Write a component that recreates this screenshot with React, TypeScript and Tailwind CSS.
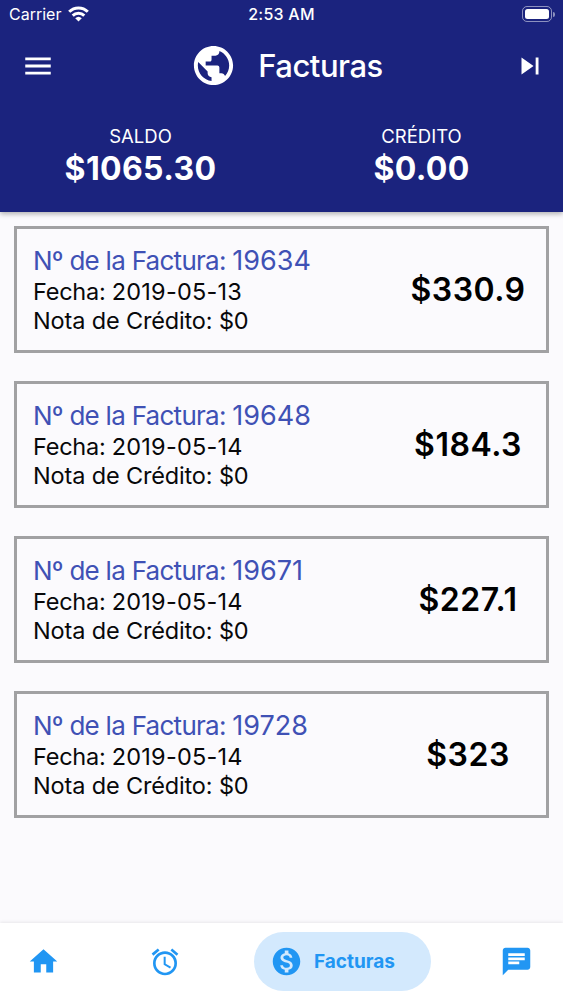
import { MdAccessAlarm, MdChat, MdHome, MdMenu, MdMonetizationOn, MdPublic, MdSkipNext } from "react-icons/md";

type Invoice = {
  number: string;
  date: string;
  credit: string;
  total: string;
};

const invoices: Invoice[] = [
  { number: "19634", date: "2019-05-13", credit: "$0", total: "$330.9" },
  { number: "19648", date: "2019-05-14", credit: "$0", total: "$184.3" },
  { number: "19671", date: "2019-05-14", credit: "$0", total: "$227.1" },
  { number: "19728", date: "2019-05-14", credit: "$0", total: "$323" },
];

function WifiIcon() {
  return (
    <svg viewBox="0 0 21 16" className="h-4 w-[21px]" fill="none" stroke="currentColor" strokeWidth="3">
      <path d="M1.2 5.8a13.2 13.2 0 0 1 18.6 0" />
      <path d="M4.7 9.6a8.3 8.3 0 0 1 11.6 0" />
      <path d="M10.5 15.6 7.2 12.3a4.8 4.8 0 0 1 6.6 0Z" fill="currentColor" stroke="none" />
    </svg>
  );
}

function BatteryIcon() {
  return (
    <div className="flex items-center gap-px">
      <div className="h-4 w-[30px] rounded-[5px] border border-white/50 p-[2px]">
        <div className="h-full rounded-[2.5px] bg-white" />
      </div>
      <div className="h-[5px] w-[2px] rounded-r-full bg-white/50" />
    </div>
  );
}

function StatusBar() {
  return (
    <div className="grid h-7 grid-cols-3 items-center pr-2 pl-[9px] text-base">
      <div className="flex items-center gap-[7px]">
        <span>Carrier</span>
        <WifiIcon />
      </div>
      <span className="pr-px text-center font-medium tracking-[0.25px]">2:53 AM</span>
      <div className="flex justify-end">
        <BatteryIcon />
      </div>
    </div>
  );
}

function Balance({ label, amount }: { label: string; amount: string }) {
  return (
    <div className="flex flex-1 flex-col items-center">
      <span className="text-[18.5px] leading-[25px]">{label}</span>
      <span className="text-[32px] leading-10 font-bold tracking-[0.35px]">{amount}</span>
    </div>
  );
}

function Header() {
  return (
    <header className="h-[212px] bg-[#1b237e] text-white shadow-[0_2px_5px_rgba(0,0,0,0.3)]">
      <StatusBar />
      <div className="flex h-[75px] items-center justify-between pr-4 pl-[21px]">
        <MdMenu className="size-[34px]" />
        <div className="ml-[5px] flex items-center gap-[21px]">
          <MdPublic className="size-[47px]" />
          <h1 className="pt-px text-[31px] leading-10 font-medium tracking-[-0.5px]">Facturas</h1>
        </div>
        <MdSkipNext className="size-[34px]" />
      </div>
      <div className="flex pt-[21px] pr-px">
        <Balance label="SALDO" amount="$1065.30" />
        <Balance label="CRÉDITO" amount="$0.00" />
      </div>
    </header>
  );
}

function InvoiceCard({ invoice }: { invoice: Invoice }) {
  return (
    <div className="flex h-[127px] items-center justify-between border-3 border-[#a1a1a3] pl-4">
      <div className="text-[23.5px] leading-[29px] text-[#08080a]">
        <div className="text-[26px] leading-[31px] tracking-[-0.73px] text-[#3f51b5]">
          Nº de la Factura: <span className="text-[27px] tracking-normal">{invoice.number}</span>
        </div>
        <div className="pt-px tracking-[-0.25px]">
          Fecha: <span className="tracking-[0.2px]">{invoice.date}</span>
        </div>
        <div className="tracking-[-0.15px]">Nota de Crédito: {invoice.credit}</div>
      </div>
      <div className="w-[156px] pt-px text-center text-[32px] font-semibold tracking-[0.5px] text-black">
        {invoice.total}
      </div>
    </div>
  );
}

function BottomNav() {
  return (
    <nav className="flex h-[77px] items-center justify-between bg-white pr-[30px] pl-[27px] text-[#2196f3] shadow-[0_-1px_3px_rgba(0,0,0,0.08)]">
      <MdHome className="size-[33px]" />
      <MdAccessAlarm className="ml-[20px] size-[32px]" />
      <div className="ml-[4px] flex h-[59px] w-[177px] items-center gap-[11px] rounded-full bg-[#d3e9fd] pl-4">
        <MdMonetizationOn className="size-[33px]" />
        <span className="pt-[2px] text-[19px] font-bold">Facturas</span>
      </div>
      <MdChat className="size-[33px]" />
    </nav>
  );
}

export default function App() {
  return (
    <div className="flex h-[1000px] w-[563px] flex-col overflow-hidden bg-[#fbfafd] font-['Inter',sans-serif]">
      <Header />
      <main className="flex flex-1 flex-col gap-7 px-[14px] pt-[14px]">
        {invoices.map((invoice) => (
          <InvoiceCard key={invoice.number} invoice={invoice} />
        ))}
      </main>
      <BottomNav />
    </div>
  );
}
